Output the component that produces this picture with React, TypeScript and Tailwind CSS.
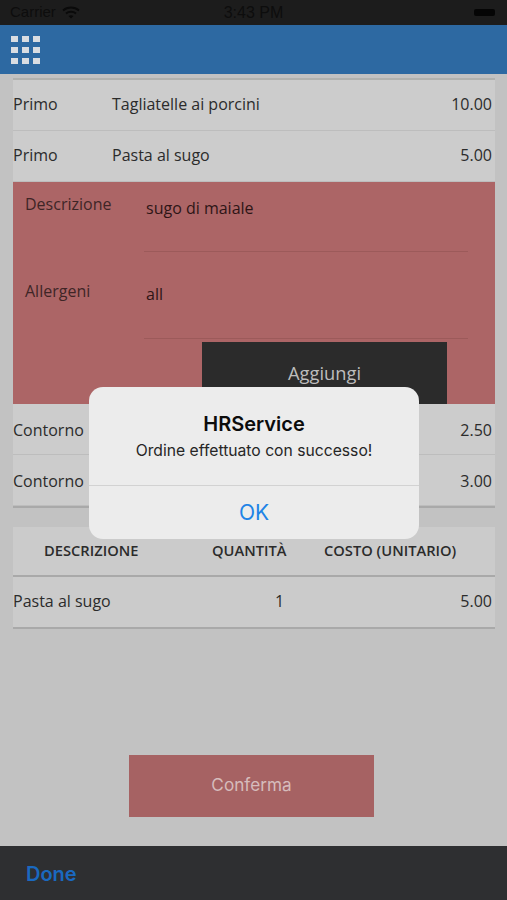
const openSans = "font-['Open_Sans',sans-serif]";

function DishRow({ kind, name, price, lift }: { kind: string; name: string; price: string; lift?: boolean }) {
  return (
    <div className={`flex h-[51px] shrink-0 items-center border-b border-[#bdbdbd] bg-[#cccccc] pr-[3px] text-[16px] text-[#2b2b2b] ${lift ? 'pb-[2px]' : 'pt-[1px]'}`}>
      <span className="w-[99px]">{kind}</span>
      <span className="flex-1">{name}</span>
      <span>{price}</span>
    </div>
  );
}

function GridIcon() {
  return (
    <div className="grid grid-cols-3 gap-x-[4px] gap-y-[5px]">
      {Array.from({ length: 9 }).map((_, i) => (
        <div key={i} className="h-[6px] w-[7px] bg-[#d9dde2]" />
      ))}
    </div>
  );
}

export default function App() {
  return (
    <div className={`relative flex h-[900px] w-[507px] flex-col overflow-hidden bg-[#c2c2c2] ${openSans}`}>
      {/* Status bar */}
      <div className="relative flex h-[25px] shrink-0 items-center bg-[#1c1c1c] pl-[10px] pr-[12px] font-['Liberation_Sans',sans-serif] text-[15px] text-[#0d0d0d]">
        <span>Carrier</span>
        <svg className="ml-[6px]" width="18" height="13" viewBox="0 0 18 13" fill="none" stroke="#0a0a0a" strokeWidth="2">
          <path d="M1 4.5C5.5 0.5 12.5 0.5 17 4.5" />
          <path d="M4 7.5C6.8 5.2 11.2 5.2 14 7.5" />
          <path d="M9 12.5L6.5 10C7.9 8.9 10.1 8.9 11.5 10Z" fill="#0a0a0a" stroke="none" />
        </svg>
        <span className="absolute left-0 right-0 text-center text-[16px]">3:43 PM</span>
        <div className="ml-auto h-[7px] w-[21px] rounded-[2px] bg-[#050505]" />
      </div>

      {/* Nav bar */}
      <div className="flex h-[49px] shrink-0 items-center bg-[#2d69a2] pl-[11px]">
        <GridIcon />
      </div>

      {/* Dish list */}
      <div className="mx-[13px] mt-[4px] flex w-[482px] flex-col border-t-2 border-[#b0b1ae]">
        <DishRow kind="Primo" name="Tagliatelle ai porcini" price="10.00" lift />
        <DishRow kind="Primo" name="Pasta al sugo" price="5.00" lift />

        {/* Expanded detail */}
        <div className="flex h-[222px] shrink-0 flex-col bg-[#ac6566] pl-[12px] text-[16px]">
          <div className="flex h-[70px] shrink-0">
            <span className="mt-[10px] w-[119px] font-medium text-[#3f2526]">Descrizione</span>
            <div className="mr-[27px] flex-1 border-b border-[#9c5a5a] pl-[2px] pt-[14px] text-[#2e1516]">sugo di maiale</div>
          </div>
          <div className="mt-[17px] flex h-[70px] shrink-0">
            <span className="mt-[10px] w-[119px] font-medium text-[#3f2526]">Allergeni</span>
            <div className="mr-[27px] flex-1 border-b border-[#9c5a5a] pl-[2px] pt-[13px] text-[#2e1516]">all</div>
          </div>
          <div className="ml-[177px] mt-[3px] flex h-[62px] w-[245px] items-center justify-center bg-[#2b2b2b] text-[18.3px] text-[#bdbdbd]">
            Aggiungi
          </div>
        </div>

        <DishRow kind="Contorno" name="" price="2.50" />
        <DishRow kind="Contorno" name="" price="3.00" />
        <div className="h-[2px] bg-[#a9a9a9]" />
      </div>

      {/* Order table */}
      <div className="mx-[13px] mt-[19px] flex w-[482px] flex-col text-[#2b2b2b]">
        <div className="flex h-[50px] items-center border-b-2 border-[#a9a9a9] bg-[#cbcbcb] pb-[2px] text-[14.7px] font-semibold">
          <span className="ml-[31px] w-[168px]">DESCRIZIONE</span>
          <span className="w-[112px]">QUANTITÀ</span>
          <span>COSTO (UNITARIO)</span>
        </div>
        <div className="flex h-[52px] items-center border-b-2 border-[#a9a9a9] bg-[#cbcbcb] pb-[2px] pr-[3px] text-[16px]">
          <span className="w-[262px]">Pasta al sugo</span>
          <span className="w-[8px] text-right">1</span>
          <span className="flex-1 text-right">5.00</span>
        </div>
      </div>

      {/* Confirm */}
      <div className="ml-[129px] mt-[126px] flex h-[62px] w-[245px] items-center justify-center bg-[#a66263] pb-[2px] font-['Inter',sans-serif] text-[17.2px] text-[#d6bcbc]">
        Conferma
      </div>

      {/* Footer */}
      <div className="mt-auto flex h-[54px] items-center bg-[#2e2f31] pl-[26px] pt-[1px] font-['Inter',sans-serif] text-[20px] font-semibold text-[#1a69c0]">
        Done
      </div>

      {/* Alert */}
      <div className="absolute left-[89px] top-[387px] flex h-[152px] w-[330px] flex-col rounded-[14px] bg-[#ececec] font-['Inter',sans-serif]">
        <div className="flex h-[99px] flex-col items-center border-b border-[#d2d2d2] pt-[22px]">
          <span className="text-[20px] font-semibold leading-[30px] text-[#0c0c0c]">HRService</span>
          <span className="text-[15.7px] leading-[23px] text-[#262626]">Ordine effettuato con successo!</span>
        </div>
        <div className="flex flex-1 items-center justify-center text-[21px] text-[#2083e6]">OK</div>
      </div>
    </div>
  );
}
